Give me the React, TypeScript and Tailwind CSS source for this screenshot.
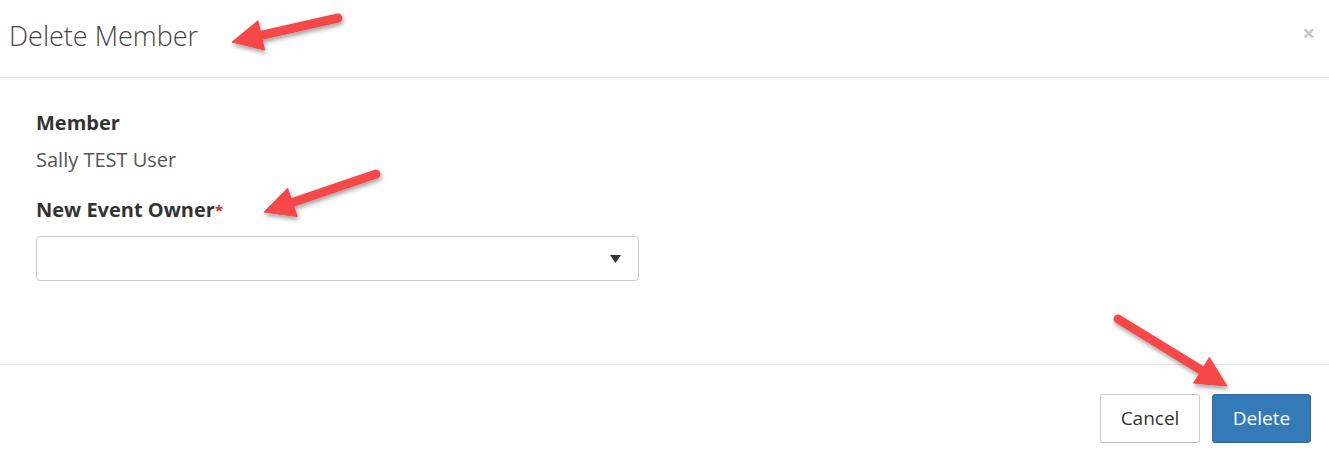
type Pt = [number, number];

// annotation arrows drawn over the modal
const ARROWS: { tail: Pt; tip: Pt }[] = [
  { tail: [338, 18], tip: [232, 42] },
  { tail: [376, 174], tip: [264, 212] },
  { tail: [1118, 319], tip: [1227, 386] },
];

function arrowPath(tail: Pt, tip: Pt) {
  const dx = tip[0] - tail[0];
  const dy = tip[1] - tail[1];
  const len = Math.hypot(dx, dy);
  const ux = dx / len;
  const uy = dy / len;
  const nx = -uy;
  const ny = ux;
  const head = 30;
  const half = 15;
  const bx = tip[0] - ux * head;
  const by = tip[1] - uy * head;
  return {
    shaft: { x1: tail[0], y1: tail[1], x2: bx + ux * 4, y2: by + uy * 4 },
    head: `${tip[0]},${tip[1]} ${bx + nx * half},${by + ny * half} ${bx - nx * half},${by - ny * half}`,
  };
}

function Arrows() {
  return (
    <svg className="absolute inset-0 pointer-events-none" width="1329" height="457">
      <defs>
        <filter id="shadow" x="-20%" y="-20%" width="140%" height="160%">
          <feDropShadow dx="1" dy="3" stdDeviation="2" floodColor="#000" floodOpacity="0.35" />
        </filter>
      </defs>
      {ARROWS.map((a, i) => {
        const p = arrowPath(a.tail, a.tip);
        return (
          <g key={i} filter="url(#shadow)" fill="#f6474a" stroke="#f6474a">
            <line {...p.shaft} strokeWidth="9" strokeLinecap="round" />
            <polygon points={p.head} strokeWidth="1" strokeLinejoin="round" />
          </g>
        );
      })}
    </svg>
  );
}

export default function App() {
  return (
    <div className="relative w-[1329px] h-[457px] bg-white overflow-hidden text-[#333]" style={{ fontFamily: '"Open Sans", sans-serif' }}>
      <div className="h-[78px] border-b border-[#e5e5e5] flex items-center justify-between pl-[9px] pr-[14px]">
        <h4 className="text-[27px] font-light text-[#444] -mt-[5px]">Delete Member</h4>
        <span className="text-[22px] font-bold text-[#c8c8c8] leading-none -mt-[14px]">×</span>
      </div>

      <div className="h-[287px] border-b border-[#e5e5e5] pl-[36px] pt-[32px]">
        <div className="text-[20px] font-bold leading-[26px]">Member</div>
        <div className="text-[20px] leading-[26px] text-[#555] mt-[11px]">Sally TEST User</div>
        <div className="text-[20px] font-bold leading-[26px] mt-[24px]">
          New Event Owner<span className="text-[#e02222] text-[15px] align-top">*</span>
        </div>
        <div className="mt-[13px] w-[603px] h-[45px] border border-[#ccc] rounded-[4px] flex items-center justify-end pr-[17px]">
          <svg width="11" height="8" viewBox="0 0 11 8">
            <polygon points="0,0 11,0 5.5,8" fill="#333" />
          </svg>
        </div>
      </div>

      <div className="flex justify-end gap-[12px] pt-[29px] pr-[18px]">
        <button className="w-[100px] h-[49px] bg-white border border-[#ccc] border-b-[#bbb] rounded-[3px] text-[19px] text-[#333]">Cancel</button>
        <button className="w-[99px] h-[49px] bg-[#337ab7] border border-[#2e6da4] rounded-[3px] text-[19px] text-white">Delete</button>
      </div>

      <Arrows />
    </div>
  );
}
